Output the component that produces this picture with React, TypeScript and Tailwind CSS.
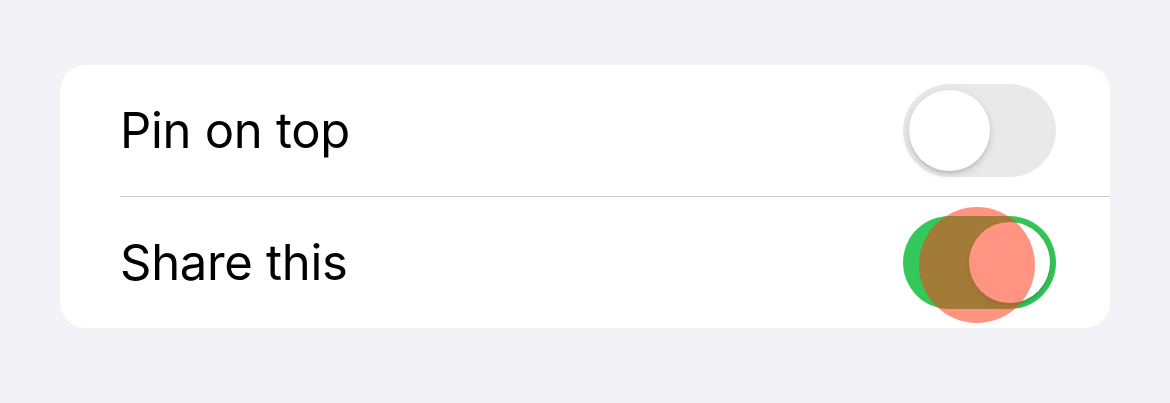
import { useState } from 'react';

function Toggle({ on, onChange, pressed }: { on: boolean; onChange: () => void; pressed?: boolean }) {
  return (
    <button
      type="button"
      onClick={onChange}
      className={`relative flex h-[93px] w-[153px] shrink-0 items-center rounded-full p-[6px] ${
        on ? 'justify-end bg-[#34c759]' : 'justify-start bg-[#e9e9ea]'
      }`}
    >
      <span className="h-[81px] w-[81px] rounded-full bg-white shadow-[0_3px_8px_rgba(0,0,0,0.15),0_3px_1px_rgba(0,0,0,0.06)]" />
      {pressed && (
        <span className="pointer-events-none absolute left-[16px] top-[-9px] h-[116px] w-[116px] rounded-full bg-[rgba(255,60,30,0.55)]" />
      )}
    </button>
  );
}

export default function App() {
  const [pin, setPin] = useState(false);
  const [share, setShare] = useState(true);

  return (
    <div className="min-h-screen bg-[#f2f2f7] px-[60px] pt-[65px] font-['Inter','Liberation_Sans',sans-serif] text-black">
      <div className="overflow-hidden rounded-[26px] bg-white">
        <div className="flex h-[131px] items-center justify-between pl-[60px] pr-[54px]">
          <span className="text-[49px] leading-none tracking-[-0.3px]">Pin on top</span>
          <Toggle on={pin} onChange={() => setPin(!pin)} />
        </div>
        <div className="ml-[60px] h-px bg-[#c8c8cc]" />
        <div className="flex h-[131px] items-center justify-between pl-[60px] pr-[54px]">
          <span className="text-[49px] leading-none tracking-[-0.3px]">Share this</span>
          <Toggle on={share} onChange={() => setShare(!share)} pressed />
        </div>
      </div>
    </div>
  );
}
